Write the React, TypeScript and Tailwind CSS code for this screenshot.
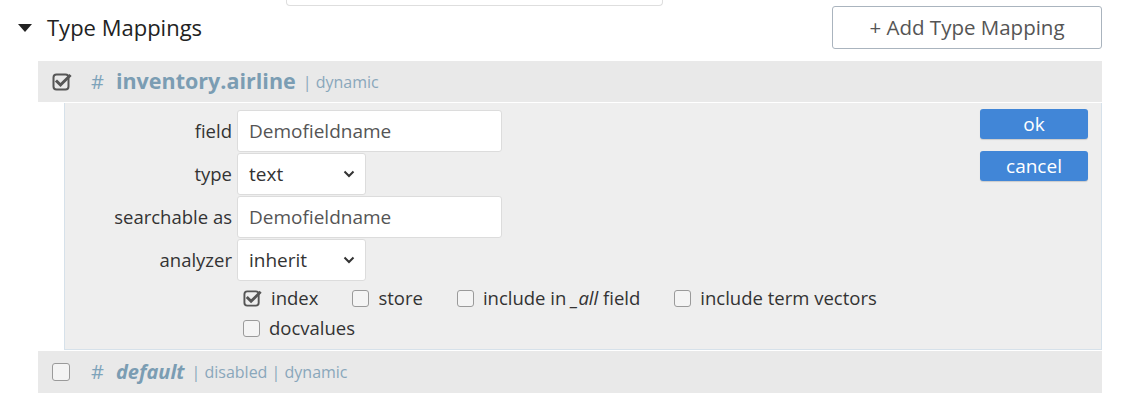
import React from "react";

const CheckedBox = ({ size = 19 }: { size?: number }) => (
  <svg width={size} height={size} viewBox="0 0 20 20" className="shrink-0">
    <rect x="1.5" y="2.5" width="15" height="15" rx="3" fill="none" stroke="#555" strokeWidth="2" />
    <path d="M5 9.5 L8.5 13 L17.5 4" fill="none" stroke="#555" strokeWidth="3" strokeLinecap="square" />
  </svg>
);

const EmptyBox = ({ size = 18 }: { size?: number }) => (
  <span
    className="shrink-0 inline-block rounded-[3px] border-[1.5px] border-[#9a9a9a] bg-[#f4f4f4]"
    style={{ width: size, height: size }}
  />
);

const Chevron = () => (
  <svg width="12" height="8" viewBox="0 0 12 8" className="shrink-0">
    <path d="M1.5 1.5 L6 6 L10.5 1.5" fill="none" stroke="#333" strokeWidth="2" />
  </svg>
);

const Row = ({ label, children }: { label: string; children: React.ReactNode }) => (
  <div className="flex items-center h-[42px]">
    <div className="w-[172px] text-right pr-[5px] text-[18.5px] text-[#333]">{label}</div>
    {children}
  </div>
);

const TextInput = ({ value }: { value: string }) => (
  <div className="w-[265px] h-[42px] bg-white border border-[#dcdcdc] rounded-[3px] flex items-center px-[11px] text-[19px] text-[#555]">
    {value}
  </div>
);

const Select = ({ value }: { value: string }) => (
  <div className="w-[129px] h-[42px] bg-white border border-[#dcdcdc] rounded-[3px] flex items-center justify-between pl-[11px] pr-[10px] text-[19px] text-[#333]">
    <span>{value}</span>
    <Chevron />
  </div>
);

const Check = ({ checked, children }: { checked?: boolean; children: React.ReactNode }) => (
  <div className="flex items-center gap-[9px] text-[18.5px] text-[#333]">
    {checked ? <CheckedBox size={19} /> : <EmptyBox size={17} />}
    <span>{children}</span>
  </div>
);

export default function App() {
  return (
    <div
      className="w-[1122px] h-[402px] bg-white overflow-hidden"
      style={{ fontFamily: '"Open Sans", "Noto Sans", sans-serif' }}
    >
      <div className="ml-[286px] w-[377px] h-[6px] border border-t-0 border-[#dedede] rounded-b-[4px]" />
      <div className="flex items-center justify-between h-[43px] pr-[20px]">
        <div className="flex items-center pl-[18px] gap-[15px]">
          <svg width="14" height="8" viewBox="0 0 14 8">
            <path d="M0 0 L14 0 L7 8 Z" fill="#222" />
          </svg>
          <span className="text-[22px] text-[#222]">Type Mappings</span>
        </div>
        <div className="w-[270px] h-[43px] border border-[#aab4be] rounded-[3px] flex items-center justify-center text-[20.5px] text-[#555]">
          + Add Type Mapping
        </div>
      </div>

      <div className="ml-[38px] w-[1064px] mt-[12px]">
        <div className="h-[41px] bg-[#e9e9e9] flex items-center pl-[14px]">
          <CheckedBox size={20} />
          <span className="ml-[19px] text-[20px] text-[#7ea3ba]">#</span>
          <span className="ml-[12px] text-[21.5px] font-bold text-[#7b9db3]">inventory.airline</span>
          <span className="ml-[7px] text-[16px] text-[#89a7bb]">| dynamic</span>
        </div>

        <div className="ml-[26px] mt-[1px] h-[247px] bg-[#eeeeee] border-l border-r border-b border-[#d6e1ea] flex">
          <div className="flex-1 pt-[7px]">
            <div className="flex flex-col gap-px">
              <Row label="field">
                <TextInput value="Demofieldname" />
              </Row>
              <Row label="type">
                <Select value="text" />
              </Row>
              <Row label="searchable as">
                <TextInput value="Demofieldname" />
              </Row>
              <Row label="analyzer">
                <Select value="inherit" />
              </Row>
            </div>
            <div className="ml-[178px] mt-[5px] flex flex-col gap-[6px]">
              <div className="flex items-center gap-[34px] h-[24px]">
                <Check checked>index</Check>
                <Check>store</Check>
                <Check>
                  include in <span className="italic">_all</span> field
                </Check>
                <Check>include term vectors</Check>
              </div>
              <div className="flex items-center h-[24px]">
                <Check>docvalues</Check>
              </div>
            </div>
          </div>
          <div className="w-[108px] mr-[13px] mt-[6px] flex flex-col gap-[12px]">
            <div className="h-[30px] rounded-[3px] bg-[#4186d7] text-white text-[19px] flex items-center justify-center shadow-[0_1px_1px_rgba(0,0,0,0.15)]">
              ok
            </div>
            <div className="h-[30px] rounded-[3px] bg-[#4186d7] text-white text-[19px] flex items-center justify-center shadow-[0_1px_1px_rgba(0,0,0,0.15)]">
              cancel
            </div>
          </div>
        </div>

        <div className="mt-[1px] h-[42px] bg-[#e9e9e9] flex items-center pl-[14px]">
          <EmptyBox size={18} />
          <span className="ml-[21px] text-[20px] text-[#7ea3ba]">#</span>
          <span className="ml-[12px] text-[20px] font-bold italic text-[#7b9db3]">default</span>
          <span className="ml-[7px] text-[16px] text-[#89a7bb]">| disabled | dynamic</span>
        </div>
      </div>
    </div>
  );
}
